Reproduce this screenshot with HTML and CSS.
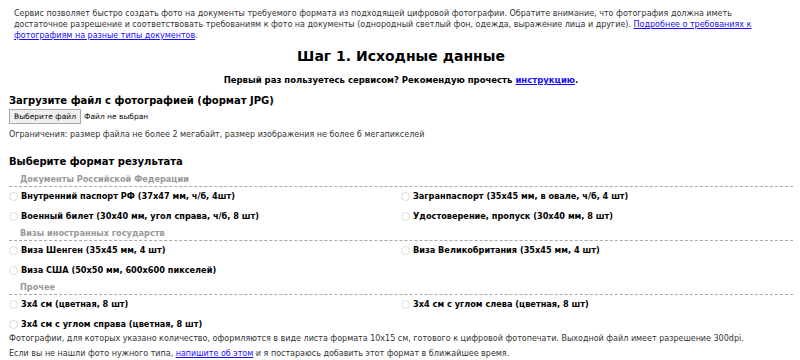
FILE: index.html
```html
<!DOCTYPE html>
<html lang="ru">
<head>
  <meta charset="UTF-8">
  <title>Фото на документы</title>
  <link rel="stylesheet" href="styles.css">
</head>
<body>

  <p class="intro">
    Сервис позволяет быстро создать фото на документы требуемого формата из подходящей цифровой фотографии. Обратите внимание, что фотография должна иметь
    достаточное разрешение и соответствовать требованиям к фото на документы (однородный светлый фон, одежда, выражение лица и другие). <a href="#">Подробнее о требованиях к фотографиям на разные типы документов</a>.
  </p>

  <h1 class="step-title">Шаг 1. Исходные данные</h1>
  <p class="first-time">Первый раз пользуетесь сервисом? Рекомендую прочесть <a href="#">инструкцию</a>.</p>

  <h2 class="section-title">Загрузите файл с фотографией (формат JPG)</h2>
  <div class="file-row">
    <button class="file-button">Выберите файл</button>
    <span class="file-name">Файл не выбран</span>
  </div>
  <p class="limits">Ограничения: размер файла не более 2 мегабайт, размер изображения не более 6 мегапикселей</p>

  <h2 class="section-title format-title">Выберите формат результата</h2>

  <div class="group">
    <div class="group-title">Документы Российской Федерации</div>
    <div class="options">
      <label class="option"><span class="radio"></span>Внутренний паспорт РФ (37x47 мм, ч/б, 4шт)</label>
      <label class="option"><span class="radio"></span>Загранпаспорт (35x45 мм, в овале, ч/б, 4 шт)</label>
      <label class="option"><span class="radio"></span>Военный билет (30x40 мм, угол справа, ч/б, 8 шт)</label>
      <label class="option"><span class="radio"></span>Удостоверение, пропуск (30x40 мм, 8 шт)</label>
    </div>
  </div>

  <div class="group">
    <div class="group-title">Визы иностранных государств</div>
    <div class="options">
      <label class="option"><span class="radio"></span>Виза Шенген (35x45 мм, 4 шт)</label>
      <label class="option"><span class="radio"></span>Виза Великобритания (35x45 мм, 4 шт)</label>
      <label class="option"><span class="radio"></span>Виза США (50x50 мм, 600x600 пикселей)</label>
    </div>
  </div>

  <div class="group">
    <div class="group-title">Прочее</div>
    <div class="options">
      <label class="option"><span class="radio"></span>3x4 см (цветная, 8 шт)</label>
      <label class="option"><span class="radio"></span>3x4 см с углом слева (цветная, 8 шт)</label>
      <label class="option"><span class="radio"></span>3x4 см с углом справа (цветная, 8 шт)</label>
    </div>
  </div>

  <p class="note">Фотографии, для которых указано количество, оформляются в виде листа формата 10x15 см, готового к цифровой фотопечати. Выходной файл имеет разрешение 300dpi.</p>
  <p class="note">Если вы не нашли фото нужного типа, <a href="#">напишите об этом</a> и я постараюсь добавить этот формат в ближайшее время.</p>

</body>
</html>
```

FILE: styles.css
```css
body {
  margin: 0;
  padding: 0 7px 0 9px;
  font-family: "DejaVu Sans", Verdana, sans-serif;
  font-size: 8px;
  line-height: 11px;
  color: #333;
  background: #fff;
}

a {
  color: #1a0dff;
}

.intro {
  margin: 8px 23px 0 5px;
}

.step-title {
  margin: 6px 0 0;
  text-align: center;
  font-size: 14px;
  line-height: 18px;
  color: #000;
}

.first-time {
  margin: 10px 0 0;
  text-align: center;
  font-size: 8.5px;
  font-weight: bold;
  color: #000;
}

.section-title {
  margin: 8px 0 0;
  font-size: 10px;
  line-height: 14px;
  color: #000;
}

.format-title {
  margin-top: 15px;
}

.file-row {
  display: flex;
  align-items: center;
  margin-top: 1px;
}

.file-button {
  height: 15px;
  padding: 0 4px;
  font-family: "DejaVu Sans", Verdana, sans-serif;
  font-size: 7.5px;
  border: 1px solid #a9a9a9;
  background: #efefef;
  color: #000;
}

.file-name {
  margin-left: 3px;
  font-size: 7.5px;
  color: #000;
}

.limits {
  margin: 5px 0 0;
}

.group-title {
  margin-top: 5px;
  padding: 0 0 1px 11px;
  border-bottom: 1px dashed #aaa;
  font-size: 8.2px;
  font-weight: bold;
  color: #999;
}

.options {
  display: grid;
  grid-template-columns: 1fr 1fr;
  row-gap: 7px;
  padding-top: 3px;
}

.option {
  display: flex;
  align-items: center;
  height: 13px;
  font-size: 8.2px;
  font-weight: bold;
  color: #000;
}

.radio {
  width: 7px;
  height: 7px;
  margin: 0 3px 1px 0;
  border: 1px solid #ddd;
  border-radius: 50%;
}

.note {
  margin: 0;
  line-height: 15px;
}
```
